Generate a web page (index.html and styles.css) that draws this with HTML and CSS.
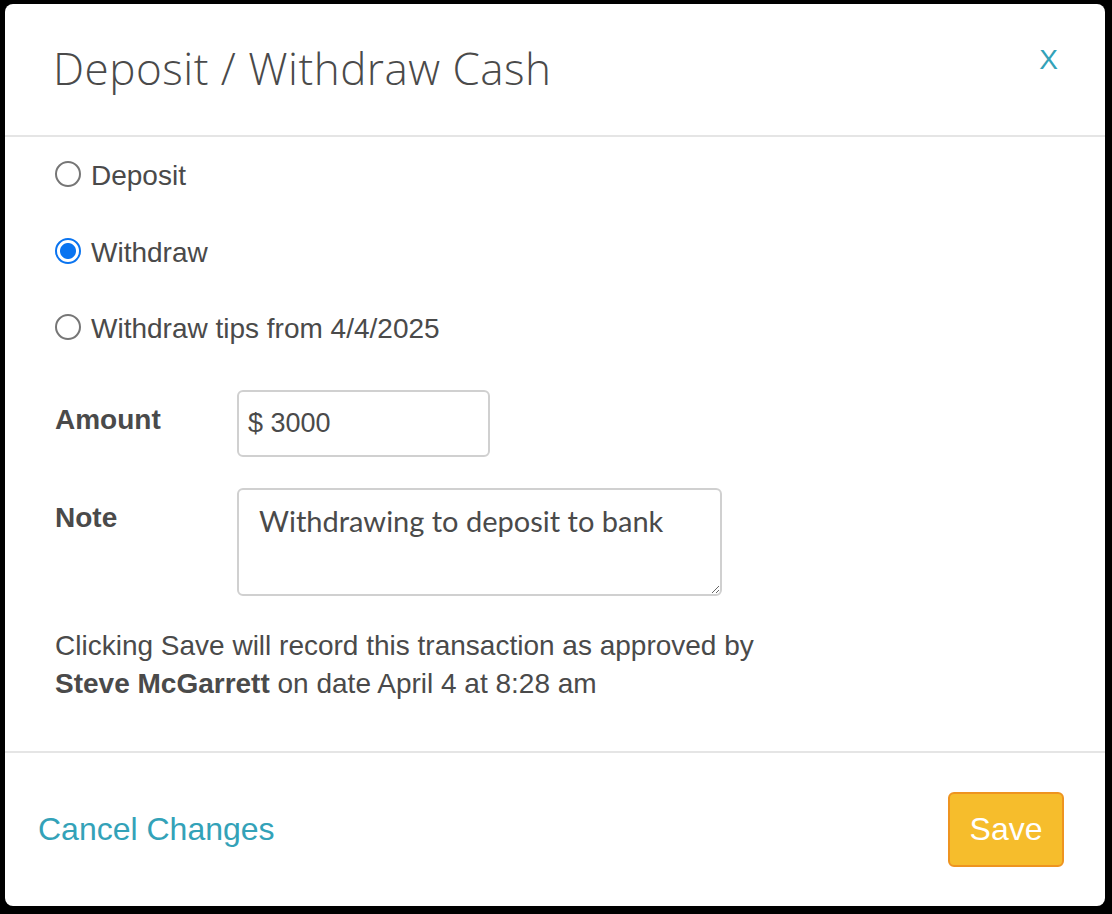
FILE: index.html
```html
<!DOCTYPE html>
<html lang="en">
<head>
<meta charset="utf-8">
<title>Deposit / Withdraw Cash</title>
<link rel="stylesheet" href="styles.css">
</head>
<body>
<div class="modal">
  <header class="modal-header">
    <h1 class="title">Deposit / Withdraw Cash</h1>
    <a class="close" href="#">X</a>
  </header>
  <section class="modal-body">
    <div class="radios">
      <label class="radio-row"><input type="radio" name="kind" class="radio"> <span>Deposit</span></label>
      <label class="radio-row"><input type="radio" name="kind" class="radio" checked> <span>Withdraw</span></label>
      <label class="radio-row"><input type="radio" name="kind" class="radio"> <span>Withdraw tips from 4/4/2025</span></label>
    </div>
    <div class="field">
      <div class="field-label">Amount</div>
      <div class="amount-input">$ 3000</div>
    </div>
    <div class="field field-note">
      <div class="field-label">Note</div>
      <textarea class="note">Withdrawing to deposit to bank</textarea>
    </div>
    <p class="approval">Clicking Save will record this transaction as approved by<br><strong>Steve McGarrett</strong> on date April 4 at 8:28 am</p>
  </section>
  <footer class="modal-footer">
    <a class="cancel" href="#">Cancel Changes</a>
    <button class="save" type="button">Save</button>
  </footer>
</div>
</body>
</html>
```

FILE: styles.css
```css
html, body {
  margin: 0;
  padding: 0;
  background: #000;
}
body {
  padding: 4px 7px 8px 5px;
  font-family: "Liberation Sans", Arial, sans-serif;
  color: #4a4a4a;
}
.modal {
  background: #fff;
  border-radius: 8px;
  height: 902px;
  display: flex;
  flex-direction: column;
  overflow: hidden;
}
.modal-header {
  height: 133px;
  box-sizing: border-box;
  border-bottom: 2px solid #e5e5e5;
  display: flex;
  justify-content: space-between;
  align-items: flex-start;
  padding: 0 47px 0 48px;
}
.title {
  margin: 0;
  padding-top: 34px;
  font-family: "Open Sans", sans-serif;
  font-weight: 300;
  font-size: 44px;
  line-height: 60px;
  color: #4a4a4a;
  letter-spacing: 0.5px;
}
.close {
  margin-top: 38px;
  font-size: 28px;
  line-height: 36px;
  color: #33a2b8;
  text-decoration: none;
}
.modal-body {
  flex: 1;
  padding: 19px 50px 0 50px;
  border-bottom: 2px solid #e5e5e5;
}
.radios {
  display: flex;
  flex-direction: column;
  gap: 36.5px;
}
.radio-row {
  height: 40px;
  display: flex;
  align-items: center;
  gap: 10px;
  font-size: 28px;
  color: #4a4a4a;
}
.radio {
  appearance: none;
  -webkit-appearance: none;
  margin: 0;
  width: 26px;
  height: 26px;
  border: 2px solid #767676;
  border-radius: 50%;
  box-sizing: border-box;
  background: #fff;
  position: relative;
  top: -2px;
}
.radio:checked {
  border: 2px solid #0a74f0;
  background: radial-gradient(circle, #0a74f0 0 7.5px, #fff 8.5px);
}
.field {
  display: flex;
  align-items: flex-start;
  margin-top: 41px;
}
.field-note {
  margin-top: 31px;
}
.field-label {
  width: 182px;
  box-sizing: border-box;
  font-weight: bold;
  font-size: 28px;
  line-height: 32px;
  padding-top: 14px;
  color: #4a4a4a;
}
.amount-input {
  width: 253px;
  height: 67px;
  box-sizing: border-box;
  border: 2px solid #d0d0d0;
  border-radius: 6px;
  padding: 0 9px;
  display: flex;
  align-items: center;
  font-size: 27px;
  color: #4a4a4a;
}
.note {
  width: 485px;
  height: 108px;
  box-sizing: border-box;
  border: 2px solid #d0d0d0;
  border-radius: 6px;
  padding: 12px 20px;
  margin: 0;
  font-family: "Lato", sans-serif;
  font-size: 29px;
  line-height: 38px;
  color: #4a4a4a;
  resize: both;
  outline: none;
}
.approval {
  margin: 31px 0 0 0;
  font-size: 28px;
  line-height: 38px;
  color: #4a4a4a;
}
.approval strong {
  font-weight: bold;
}
.modal-footer {
  height: 153px;
  display: flex;
  align-items: center;
  justify-content: space-between;
  padding: 0 41px 0 33px;
}
.cancel {
  font-size: 32px;
  color: #33a2b8;
  text-decoration: none;
}
.save {
  width: 116px;
  height: 75px;
  background: #f6bd2c;
  border: 2px solid #ee9420;
  border-radius: 6px;
  color: #fff;
  font-family: "Liberation Sans", Arial, sans-serif;
  font-size: 32px;
  padding: 0;
}
```
